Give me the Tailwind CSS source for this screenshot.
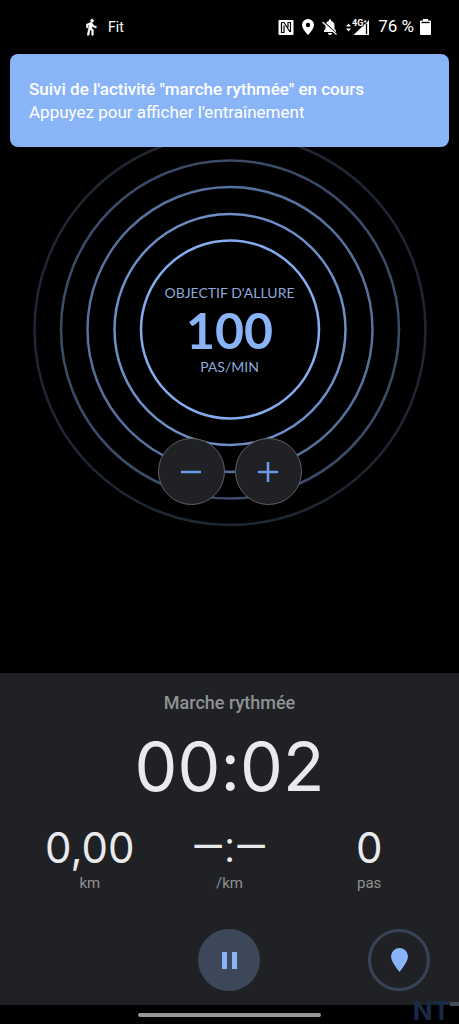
<!DOCTYPE html>
<html lang="fr">
<head>
<meta charset="utf-8">
<meta name="viewport" content="width=device-width, initial-scale=1">
<title>Marche rythmée</title>
<script src="https://cdn.jsdelivr.net/npm/@tailwindcss/browser@4"></script>
</head>
<body class="relative flex min-h-screen flex-col overflow-x-hidden bg-black font-['Roboto',sans-serif] text-[#e8eaed]">

<header class="flex h-[54px] items-center justify-between pr-7 pl-[82px] text-white">
  <div class="flex items-center gap-2 text-sm">
    <svg class="size-[18px]" viewBox="0 0 24 24" fill="currentColor" stroke="currentColor" stroke-width=".8" aria-hidden="true"><path d="M13.500 5.500c1.100 0 2-.9 2-2s-.9-2-2-2-2 .9-2 2 .9 2 2 2zM9.800 8.900L7 23h2.100l1.800-8 2.100 2v6h2v-7.500l-2.100-2 .6-3C14.800 12 16.800 13 19 13v-2c-1.900 0-3.500-1-4.300-2.400l-1-1.600c-.4-.6-1-1-1.700-1-.3 0-.5.1-.8.1L6 8.300V13h2V9.600l1.800-.7"/></svg>
    <span>Fit</span>
  </div>
  <div class="flex items-center">
    <svg class="mr-2 h-[15px] w-4" viewBox="0 0 16 15" aria-hidden="true"><rect x=".5" width="15" height="15" rx="1" fill="#fff"/><path d="M3.500 2.500v10h2.500V5.500M3.500 2.500H6l6 9.500M12.500 12V2.500H10v5" fill="none" stroke="#000" stroke-width="1.200"/></svg>
    <svg class="mr-2 h-4 w-3" viewBox="0 0 12 16" aria-hidden="true"><path d="M6 0a6 6 0 0 0-6 6c0 4 6 10 6 10s6-6 6-10a6 6 0 0 0-6-6z" fill="#fff"/><circle cx="6" cy="6" r="2.200" fill="#000"/></svg>
    <svg class="mr-2 size-4" viewBox="0 0 16 16" aria-hidden="true"><path d="M2 13v-1.500L3.500 10V6.500c0-2.500 1.500-4.100 3.400-4.500V1.300a1.100 1.100 0 0 1 2.200 0V2c2 .4 3.400 2 3.400 4.500V10l1.500 1.500V13zM6 14h4a2 2 0 0 1-4 0z" fill="#fff"/><path d="M1.500 2.500l14 13" stroke="#000" stroke-width="1.200"/><path d="M.5 3l14 12.500" stroke="#fff" stroke-width="1.200"/></svg>
    <svg class="mr-2 h-[18px] w-6" viewBox="0 0 24 18" aria-hidden="true"><path d="M0 8.500L2.500 5.500 5 8.500zM0 10.500h5L2.500 13.500z" fill="#fff"/><path d="M7.500 17L23 2v15z" fill="#fff"/><path d="M20.500 6v10" stroke="#000" stroke-width="1.300"/><text x="6" y="8" font-family="Roboto, sans-serif" font-size="9" font-weight="700" fill="#fff" stroke="#000" stroke-width="1.500" paint-order="stroke">4G⁺</text></svg>
    <span class="mr-[6px] text-[17px]">76 %</span>
    <svg class="h-4 w-[11px]" viewBox="0 0 11 16" aria-hidden="true"><path d="M3 0h5v1.500h2a1 1 0 0 1 1 1V15a1 1 0 0 1-1 1H1a1 1 0 0 1-1-1V2.500a1 1 0 0 1 1-1h2z" fill="#fff"/><path d="M1.500 3.500h8" stroke="#000" stroke-width="1.300"/></svg>
  </div>
</header>

<div role="status" class="z-10 mx-[10px] flex h-[93px] flex-col justify-center rounded-lg bg-[#8ab4f8] px-[19px] text-[17px] leading-[23px] text-white">
  <p class="font-medium">Suivi de l'activité "marche rythmée" en cours</p>
  <p>Appuyez pour afficher l'entraînement</p>
</div>

<main class="-mt-[14px] grid flex-1 grid-cols-1 content-start justify-items-center">
  <svg class="col-start-1 row-start-1 size-[394px]" viewBox="0 0 394 394" fill="none" stroke-width="2.500" aria-hidden="true">
    <circle cx="197" cy="196.500" r="89" stroke="#84acee"/>
    <circle cx="197" cy="196.500" r="115.500" stroke="#6d8fc6"/>
    <circle cx="197" cy="196.500" r="142.500" stroke="#56719d"/>
    <circle cx="197" cy="196.500" r="169" stroke="#3b4b68"/>
    <circle cx="197" cy="196.500" r="195.500" stroke="#1f2733"/>
  </svg>
  <div class="col-start-1 row-start-1 flex flex-col items-center self-center font-['Lato',sans-serif] text-sm leading-5 text-[#8ea9dc]">
    <span>OBJECTIF D'ALLURE</span>
    <strong class="text-[50px] leading-[54px] font-bold text-[#8ab4f8]">100</strong>
    <span>PAS/MIN</span>
  </div>
  <div class="col-start-1 row-start-1 mb-[22px] flex gap-[10px] self-end">
    <button type="button" aria-label="Diminuer l'allure" class="grid size-[67px] place-items-center rounded-full border border-[#5f6063] bg-[#202124] text-[#6c9cec]"><svg class="size-5" viewBox="0 0 20 20" stroke="currentColor" stroke-width="2.500" aria-hidden="true"><path d="M0 10h20"/></svg></button>
    <button type="button" aria-label="Augmenter l'allure" class="grid size-[67px] place-items-center rounded-full border border-[#5f6063] bg-[#202124] text-[#6c9cec]"><svg class="size-5" viewBox="0 0 20 20" stroke="currentColor" stroke-width="2.500" aria-hidden="true"><path d="M0 10h20M10 0v20"/></svg></button>
  </div>
</main>

<section class="bg-[#202124] pb-[14px] font-['Inter',sans-serif]">
  <h1 class="pt-5 text-center font-['Roboto',sans-serif] text-lg leading-5 font-medium text-[#8f9195]">Marche rythmée</h1>
  <p class="pt-[18px] text-center text-[68px] leading-[70px] [font-feature-settings:'calt'_0]">00:02</p>
  <dl class="grid grid-cols-3 px-5 pt-6 text-center">
    <div class="flex flex-col-reverse"><dt class="pt-[2px] font-['Roboto',sans-serif] text-[15px] leading-5 text-[#8f9195]">km</dt><dd class="text-[42px] leading-[46px]">0,00</dd></div>
    <div class="flex flex-col-reverse"><dt class="pt-[2px] font-['Roboto',sans-serif] text-[15px] leading-5 text-[#8f9195]">/km</dt><dd class="font-['Roboto',sans-serif] text-[42px] leading-[46px]">—:—</dd></div>
    <div class="flex flex-col-reverse"><dt class="pt-[2px] font-['Roboto',sans-serif] text-[15px] leading-5 text-[#8f9195]">pas</dt><dd class="text-[42px] leading-[46px]">0</dd></div>
  </dl>
  <div class="grid grid-cols-3 items-center px-[29px] pt-9 text-[#8ab4f8]">
    <button type="button" aria-label="Pause" class="col-start-2 grid size-[62px] place-items-center justify-self-center rounded-full bg-[#3c475a]"><svg class="h-[17px] w-[15px]" viewBox="0 0 15 17" fill="currentColor" aria-hidden="true"><path d="M0 0h5v17H0zM10 0h5v17h-5z"/></svg></button>
    <button type="button" aria-label="Carte" class="col-start-3 grid size-[62px] place-items-center justify-self-end rounded-full border-3 border-[#384356]"><svg class="h-6 w-[17px]" viewBox="0 0 17 24" fill="currentColor" aria-hidden="true"><path d="M8.500 0A8.500 8.500 0 0 0 0 8.500C0 14 8.500 24 8.500 24S17 14 17 8.500A8.500 8.500 0 0 0 8.500 0z"/></svg></button>
  </div>
</section>

<footer class="flex h-[19px] items-center justify-center">
  <div class="h-1 w-[40%] rounded-full bg-[#98989a]"></div>
  <div class="absolute right-[9px] bottom-0 font-['Inter',sans-serif] text-[26px] leading-[26px] font-bold text-[#182a47]">NT</div>
  <div class="absolute right-0 bottom-[18px] h-1 w-[9px] bg-[#454b54]"></div>
</footer>
</body>
</html>
